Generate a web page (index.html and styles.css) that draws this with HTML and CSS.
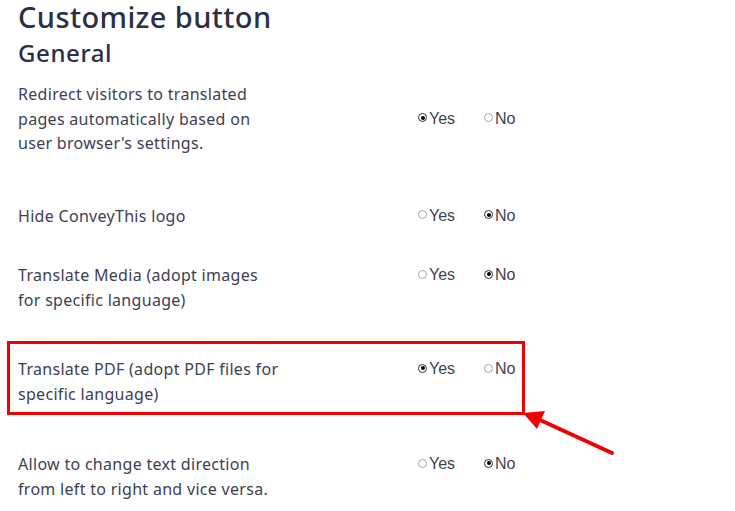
FILE: index.html
```html
<!DOCTYPE html>
<html>
<head>
<meta charset="utf-8">
<link rel="stylesheet" href="styles.css">
</head>
<body>
<div class="page">
  <h1 class="title">Customize button</h1>
  <h2 class="subtitle">General</h2>

  <div class="row row-redirect">
    <div class="label">Redirect visitors to translated pages automatically based on user browser's settings.</div>
    <div class="options options-mid">
      <span class="opt"><span class="radio checked"></span>Yes</span>
      <span class="opt"><span class="radio"></span>No</span>
    </div>
  </div>

  <div class="row row-logo">
    <div class="label">Hide ConveyThis logo</div>
    <div class="options">
      <span class="opt"><span class="radio"></span>Yes</span>
      <span class="opt"><span class="radio checked"></span>No</span>
    </div>
  </div>

  <div class="row row-media">
    <div class="label">Translate Media (adopt images for specific language)</div>
    <div class="options">
      <span class="opt"><span class="radio"></span>Yes</span>
      <span class="opt"><span class="radio checked"></span>No</span>
    </div>
  </div>

  <div class="row row-pdf">
    <div class="highlight"></div>
    <div class="label">Translate PDF (adopt PDF files for specific language)</div>
    <div class="options">
      <span class="opt"><span class="radio checked"></span>Yes</span>
      <span class="opt"><span class="radio"></span>No</span>
    </div>
  </div>

  <div class="row">
    <div class="label">Allow to change text direction from left to right and vice versa.</div>
    <div class="options">
      <span class="opt"><span class="radio"></span>Yes</span>
      <span class="opt"><span class="radio checked"></span>No</span>
    </div>
  </div>

  <svg class="arrow" width="735" height="511" viewBox="0 0 735 511">
    <line x1="612" y1="453" x2="540" y2="420" stroke="#f00000" stroke-width="4" stroke-linecap="round"/>
    <polygon points="523,413 545,411 537,429" fill="#f00000"/>
  </svg>
</div>
</body>
</html>
```

FILE: styles.css
```css
html, body {
  margin: 0;
  padding: 0;
  background: #ffffff;
}
.page {
  position: relative;
  width: 735px;
  height: 511px;
  overflow: hidden;
  padding-left: 18px;
  padding-top: 1px;
  box-sizing: border-box;
  font-family: "Noto Sans", "Open Sans", sans-serif;
  color: #3d4052;
}
.title {
  margin: 0;
  font-size: 29px;
  font-weight: 500;
  letter-spacing: 0.4px;
  line-height: 32px;
  color: #2c2f45;
}
.subtitle {
  margin: 5px 0 0 0;
  font-size: 24px;
  font-weight: 500;
  letter-spacing: 0.6px;
  line-height: 30px;
  color: #2c2f45;
}
.row {
  position: relative;
  display: flex;
  align-items: flex-start;
  margin-top: 46px;
}
.row-redirect {
  margin-top: 14px;
}
.row-logo {
  margin-top: 48px;
  min-height: 13px;
}
.row-media {
  margin-top: 35px;
}
.row-pdf {
  margin-top: 45px;
}
.label {
  width: 266px;
  font-size: 16px;
  letter-spacing: 0.3px;
  line-height: 24.5px;
}
.options {
  display: flex;
  margin-left: 134px;
  font-family: "Liberation Sans", Arial, sans-serif;
  font-size: 16px;
  line-height: 24px;
  color: #3f4250;
}
.options-mid {
  align-self: center;
}
.opt {
  display: inline-flex;
  align-items: center;
  width: 66px;
}
.radio {
  display: inline-block;
  width: 9px;
  height: 9px;
  box-sizing: border-box;
  border: 1px solid #a6a6a6;
  border-radius: 50%;
  margin-right: 2px;
  margin-top: -2px;
  position: relative;
}
.radio.checked {
  border-color: #333;
}
.radio.checked::after {
  content: "";
  position: absolute;
  left: 1.5px;
  top: 1.5px;
  width: 4px;
  height: 4px;
  border-radius: 50%;
  background: #000;
}
.highlight {
  position: absolute;
  left: -11px;
  top: -16px;
  width: 518px;
  height: 74px;
  border: 3px solid #f00000;
  box-sizing: border-box;
  pointer-events: none;
}
.arrow {
  position: absolute;
  left: 0;
  top: 0;
  pointer-events: none;
}
```
